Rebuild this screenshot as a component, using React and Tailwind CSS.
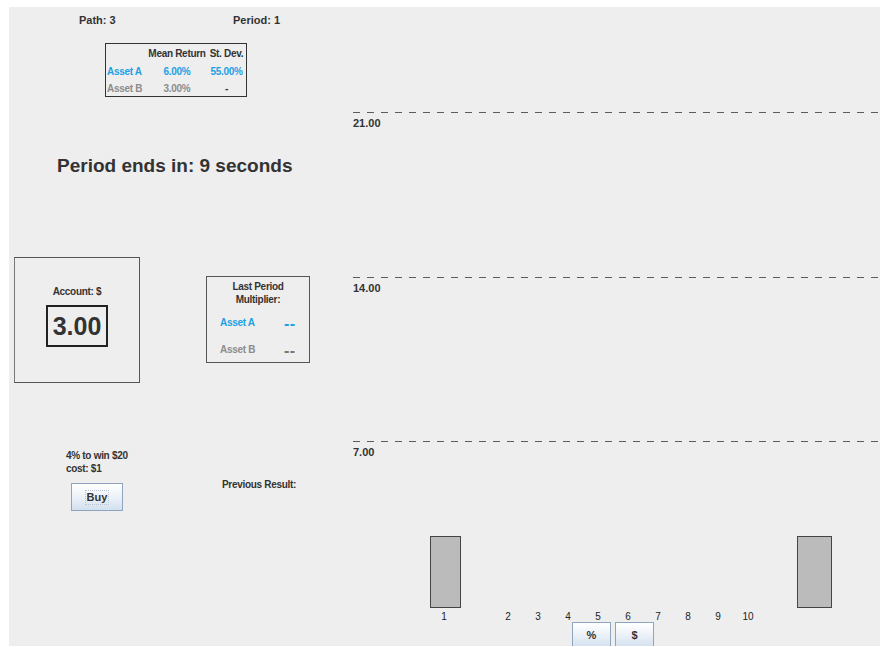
import React from "react";

const BLUE = "text-[#1ea0e4]";
const GREY = "text-[#8c8c8c]";

function DashedLine() {
  return (
    <div className="h-[1px] w-full shrink-0 bg-[repeating-linear-gradient(to_right,#5c5c5c_0px,#5c5c5c_7px,transparent_7px,transparent_14px)]" />
  );
}

function SwingButton({ children, className = "" }) {
  return (
    <div
      className={
        "flex shrink-0 items-center justify-center border border-[#8fa5bf] bg-[linear-gradient(to_bottom,#ffffff_0%,#eef3f9_45%,#d3e0ee_100%)] text-[11px] font-bold text-[#333] " +
        className
      }
    >
      {children}
    </div>
  );
}

function StatsTable() {
  return (
    <div className="ml-[96px] mt-[16px] w-[142px] border border-[#333] text-[10px] font-bold tracking-[-0.3px]">
      <div className="grid grid-cols-[41px_60px_39px] h-[18px] items-center text-[#333]">
        <div />
        <div className="text-center">Mean Return</div>
        <div className="text-center">St. Dev.</div>
      </div>
      <div className={"grid grid-cols-[41px_60px_39px] h-[18px] items-center " + BLUE}>
        <div className="pl-[1px]">Asset A</div>
        <div className="text-center">6.00%</div>
        <div className="text-center">55.00%</div>
      </div>
      <div className={"grid grid-cols-[41px_60px_39px] h-[16px] items-center " + GREY}>
        <div className="pl-[1px]">Asset B</div>
        <div className="text-center">3.00%</div>
        <div className="text-center text-[#333]">-</div>
      </div>
    </div>
  );
}

function AccountBox() {
  return (
    <div className="ml-[5px] flex h-[126px] w-[126px] flex-col items-center border border-[#555] border-l-[#777]">
      <div className="mt-[27px] h-[13px] text-[10px] font-bold leading-[13px] tracking-[-0.3px] text-[#333]">
        Account: $
      </div>
      <div className="mt-[7px] flex h-[42px] w-[62px] items-center justify-center border-2 border-[#222] text-[25px] font-bold leading-none text-[#333]">
        3.00
      </div>
    </div>
  );
}

function MultiplierBox() {
  return (
    <div className="ml-[66px] mt-[19px] flex h-[87px] w-[104px] flex-col border border-[#555] text-[10px] font-bold tracking-[-0.3px]">
      <div className="mt-[3px] text-center leading-[13px] text-[#333]">
        Last Period
        <br />
        Multiplier:
      </div>
      <div className={"mt-[10px] flex h-[13px] items-center pl-[13px] leading-[13px] " + BLUE}>
        <span className="w-[64px]">Asset A</span>
        <span className="mt-[2px] text-[16px] tracking-[0.5px]">--</span>
      </div>
      <div className={"mt-[14px] flex h-[13px] items-center pl-[13px] leading-[13px] " + GREY}>
        <span className="w-[64px]">Asset B</span>
        <span className="mt-[1px] text-[16px] tracking-[0.5px] text-[#777]">--</span>
      </div>
    </div>
  );
}

function LeftColumn() {
  return (
    <div className="flex w-[344px] shrink-0 flex-col text-[#333]">
      <div className="flex pl-[70px] pt-[6px] text-[11px] font-bold leading-[14px]">
        <span className="w-[154px]">Path: 3</span>
        <span>Period: 1</span>
      </div>

      <StatsTable />

      <div className="mt-[58px] pl-[48px] text-[19px] font-bold leading-[22px]">
        Period ends in: 9 seconds
      </div>

      <div className="mt-[80px] flex items-start">
        <AccountBox />
        <MultiplierBox />
      </div>

      <div className="mt-[66px] flex items-start text-[10px] font-bold leading-[13px] tracking-[-0.3px]">
        <div className="ml-[57px] flex w-[156px] flex-col">
          <div>4% to win $20</div>
          <div>cost: $1</div>
          <SwingButton className="ml-[5px] mt-[8px] h-[28px] w-[52px] tracking-normal">
            <span className="border border-dotted border-[#b8c4d4] px-[1px] leading-[13px]">Buy</span>
          </SwingButton>
        </div>
        <div className="mt-[29px]">Previous Result:</div>
      </div>
    </div>
  );
}

function Level({ value, height }) {
  return (
    <div className={"flex shrink-0 flex-col " + height}>
      <DashedLine />
      <div className="mt-[4px] text-[11px] font-bold leading-[13px] text-[#333]">{value}</div>
    </div>
  );
}

function Chart() {
  const ticks = [2, 3, 4, 5, 6, 7, 8, 9, 10];
  return (
    <div className="flex flex-1 flex-col pt-[105px]">
      <Level value="21.00" height="h-[165px]" />
      <Level value="14.00" height="h-[164px]" />
      <div className="flex shrink-0 flex-col">
        <DashedLine />
        <div className="mt-[4px] h-[13px] shrink-0 text-[11px] font-bold leading-[13px] text-[#333]">7.00</div>
        <div className="mt-[77px] flex h-[72px] shrink-0">
          <div className="ml-[77px] h-full w-[31px] border border-[#444] bg-[#bbbbbb]" />
          <div className="ml-[336px] h-full w-[35px] border border-[#444] bg-[#bbbbbb]" />
        </div>
        <div className="mt-[3px] flex h-[11px] shrink-0 text-[10px] leading-[11px] text-[#222]">
          <div className="ml-[76px] w-[30px] text-center">1</div>
          <div className="ml-[34px] flex">
            {ticks.map((t) => (
              <div key={t} className="w-[30px] text-center">
                {t}
              </div>
            ))}
          </div>
        </div>
        <div className="ml-[219px] flex gap-[4px]">
          <SwingButton className="h-[26px] w-[39px] text-[10px] text-[#6b4a2a]">%</SwingButton>
          <SwingButton className="h-[26px] w-[39px] text-[10px] text-[#4a3a2a]">$</SwingButton>
        </div>
      </div>
    </div>
  );
}

export default function App() {
  return (
    <div className="h-[647px] w-[883px] overflow-hidden bg-white pl-[9px] pt-[7px] font-['Liberation_Sans',Arial,sans-serif]">
      <div className="flex h-[639px] w-[871px] overflow-hidden bg-[#eeeeee]">
        <LeftColumn />
        <Chart />
      </div>
    </div>
  );
}
